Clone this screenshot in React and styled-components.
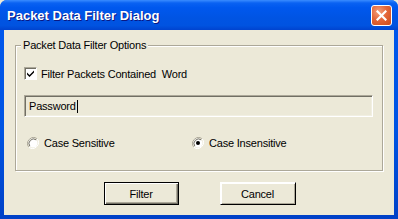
import React from "react";
import styled, { createGlobalStyle } from "styled-components";

const Global = createGlobalStyle`
  html, body { margin: 0; padding: 0; background: #ECE9D8; }
  body { width: 398px; height: 219px; overflow: hidden; }
  * { box-sizing: border-box; }
`;

const Window = styled.div`
  width: 398px;
  height: 219px;
  display: flex;
  flex-direction: column;
  background: linear-gradient(180deg, #0058EE 0%, #0054E3 60%, #0041C7 100%);
  border-radius: 7px 7px 0 0;
  overflow: hidden;
  font-family: "Liberation Sans", Arial, sans-serif;
`;

const TitleBar = styled.div`
  height: 30px;
  flex: none;
  display: flex;
  align-items: center;
  justify-content: space-between;
  padding: 0 6px 0 7px;
  background: linear-gradient(
    180deg,
    #3A8CFF 0%,
    #0A62F2 10%,
    #0058EE 25%,
    #0054E3 60%,
    #0053E0 85%,
    #0043CF 100%
  );
`;

const Title = styled.span`
  color: #fff;
  font-family: "Liberation Sans", Arial, sans-serif;
  font-weight: bold;
  font-size: 13px;
  text-shadow: 1px 1px 0 #0A1883;
  padding-top: 1px;
`;

const CloseButton = styled.div`
  width: 21px;
  height: 21px;
  border: 1px solid #fff;
  border-radius: 3px;
  background: radial-gradient(circle at 35% 30%, #F4A07C 0%, #E4673A 45%, #CC4A19 100%);
  display: flex;
  align-items: center;
  justify-content: center;
`;

const Client = styled.div`
  flex: 1;
  margin: 0 4px 4px 4px;
  background: #ECE9D8;
  display: flex;
  flex-direction: column;
  padding: 9px 11px 10px 11px;
  font-size: 11px;
  letter-spacing: -0.2px;
  color: #000;
`;

const Group = styled.fieldset`
  margin: 0;
  padding: 15px 8px 0 8px;
  height: 132px;
  border: 1px solid #ACA899;
  box-shadow: 1px 1px 0 #fff, inset 1px 1px 0 #fff;
  display: flex;
  flex-direction: column;
`;

const Legend = styled.legend`
  padding: 0 2px;
  margin-left: -3px;
  background: #ECE9D8;
  line-height: 13px;
`;

const CheckRow = styled.label`
  display: flex;
  align-items: center;
  gap: 4px;
  height: 13px;
`;

const Box = styled.span`
  width: 13px;
  height: 13px;
  flex: none;
  border-top: 1px solid #ACA899;
  border-left: 1px solid #ACA899;
  border-right: 1px solid #fff;
  border-bottom: 1px solid #fff;
  background: #fff;
  box-shadow: inset 1px 1px 0 #716F64;
  display: flex;
  align-items: center;
  justify-content: center;
`;

const TextBox = styled.div`
  margin-top: 15px;
  height: 22px;
  margin-right: 1px;
  border-top: 1px solid #ACA899;
  border-left: 1px solid #ACA899;
  border-right: 1px solid #fff;
  border-bottom: 1px solid #fff;
  box-shadow: inset 1px 1px 0 #716F64, inset -1px -1px 0 #F1EFE2;
  background: #ECE9D8;
  display: flex;
  align-items: center;
  padding-left: 4px;
`;

const Caret = styled.span`
  width: 1px;
  height: 13px;
  background: #000;
  margin-left: 1px;
`;

const RadioRow = styled.div`
  display: grid;
  grid-template-columns: 165px 1fr;
  margin-top: 19px;
  padding-left: 3px;
`;

const RadioItem = styled.label`
  display: flex;
  align-items: center;
  gap: 5px;
  height: 13px;
`;

const Buttons = styled.div`
  display: flex;
  justify-content: center;
  gap: 41px;
  margin-top: 11px;
  padding-left: 1px;
`;

const Button = styled.div`
  width: ${(p) => p.$w}px;
  height: 23px;
  display: flex;
  align-items: center;
  justify-content: center;
  background: #ECE9D8;
  border: 1px solid ${(p) => (p.$default ? "#000" : "transparent")};
  border-right-color: #000;
  border-bottom-color: #000;
  box-shadow: ${(p) =>
    p.$default
      ? "inset 1px 1px 0 #fff, inset -1px -1px 0 #716F64, inset -2px -2px 0 #ACA899"
      : "inset 1px 1px 0 #fff, inset -1px -1px 0 #ACA899"};
  ${(p) => (!p.$default ? "border-top-color: #fff; border-left-color: #fff;" : "")}
`;

const Radio = ({ checked }) => (
  <svg width="12" height="12" viewBox="0 0 12 12">
    <path d="M10.2 1.8 A6 6 0 0 0 1.8 10.2" stroke="#ACA899" strokeWidth="1" fill="none" />
    <circle cx="6" cy="6" r="4.5" fill="#fff" />
    <path d="M9.2 2.8 A4.6 4.6 0 0 0 2.8 9.2" stroke="#716F64" strokeWidth="1" fill="none" />
    <path d="M1.8 10.2 A6 6 0 0 0 10.2 1.8" stroke="#fff" strokeWidth="1" fill="none" />
    {checked && <circle cx="6" cy="6" r="2" fill="#000" />}
  </svg>
);

export default function App() {
  return (
    <>
      <Global />
      <Window>
        <TitleBar>
          <Title>Packet Data Filter Dialog</Title>
          <CloseButton>
            <svg width="11" height="11" viewBox="0 0 11 11">
              <path d="M1.5 1.5 L9.5 9.5 M9.5 1.5 L1.5 9.5" stroke="#fff" strokeWidth="2.2" strokeLinecap="square" />
            </svg>
          </CloseButton>
        </TitleBar>
        <Client>
          <Group>
            <Legend>Packet Data Filter Options</Legend>
            <CheckRow>
              <Box>
                <svg width="9" height="9" viewBox="0 0 9 9">
                  <path d="M1 3.5 L3.5 6 L8 1.5 L8 3.5 L3.5 8 L1 5.5 Z" fill="#000" />
                </svg>
              </Box>
              <span>Filter Packets Contained&nbsp; Word</span>
            </CheckRow>
            <TextBox>
              <span>Password</span>
              <Caret />
            </TextBox>
            <RadioRow>
              <RadioItem>
                <Radio />
                <span>Case Sensitive</span>
              </RadioItem>
              <RadioItem>
                <Radio checked />
                <span>Case Insensitive</span>
              </RadioItem>
            </RadioRow>
          </Group>
          <Buttons>
            <Button $w={75} $default>Filter</Button>
            <Button $w={76}>Cancel</Button>
          </Buttons>
        </Client>
      </Window>
    </>
  );
}
